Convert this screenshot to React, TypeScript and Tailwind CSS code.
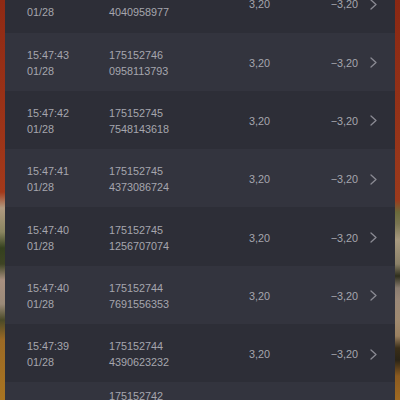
import React from 'react'

interface Trade {
    time: string;
    date: string;
    order: string[];
    price: string;
    profit: string;
}

const trades: Trade[] = [
    { time: '15:47:44', date: '01/28', order: ['175152746', '4040958977'], price: '3,20', profit: '−3,20' },
    { time: '15:47:43', date: '01/28', order: ['175152746', '0958113793'], price: '3,20', profit: '−3,20' },
    { time: '15:47:42', date: '01/28', order: ['175152745', '7548143618'], price: '3,20', profit: '−3,20' },
    { time: '15:47:41', date: '01/28', order: ['175152745', '4373086724'], price: '3,20', profit: '−3,20' },
    { time: '15:47:40', date: '01/28', order: ['175152745', '1256707074'], price: '3,20', profit: '−3,20' },
    { time: '15:47:40', date: '01/28', order: ['175152744', '7691556353'], price: '3,20', profit: '−3,20' },
    { time: '15:47:39', date: '01/28', order: ['175152744', '4390623232'], price: '3,20', profit: '−3,20' },
    { time: '15:47:38', date: '01/28', order: ['175152742', '8815630917', '2'], price: '3,20', profit: '−3,20' },
]

function Chevron() {
    return (
        <svg width="7" height="11" viewBox="0 0 7 11" fill="none">
            <polyline points="1,1 6,5.5 1,10" stroke="#8a8a93" strokeWidth="1.3" strokeLinecap="round" strokeLinejoin="round" />
        </svg>
    )
}

function TradeRow({ trade, index }: { trade: Trade; index: number }) {
    return (
        <div className={`h-[58.3px] shrink-0 flex items-center pl-[22px] pt-[2px] ${index % 2 === 0 ? 'bg-[#2d2e37]' : 'bg-[#33343e]'}`}>
            <div className="w-[82px] flex flex-col">
                <span>{trade.time}</span>
                <span>{trade.date}</span>
            </div>
            <div className="w-[117px] flex flex-col">
                {trade.order.map((line, i) => (
                    <span key={i}>{line}</span>
                ))}
            </div>
            <div className="w-[44px] text-right">{trade.price}</div>
            <div className="w-[88px] text-right">{trade.profit}</div>
            <div className="ml-[12px] flex items-center">
                <Chevron />
            </div>
        </div>
    )
}

export default function App() {
    return (
        <div
            className="h-[400px] w-full overflow-hidden flex text-[10.8px] leading-[16px] text-[#a6a6ae]"
            style={{ fontFamily: '"Liberation Sans", Arial, sans-serif' }}
        >
            {/* blurred photo showing at the edges */}
            <div className="w-[5px] shrink-0 bg-[linear-gradient(180deg,#8f2a14_0%,#a3391a_48%,#b09a80_52%,#8a8560_58%,#34401e_62%,#3e4424_66%,#a99080_70%,#9b8a78_76%,#4a4a28_80%,#9c6a25_85%,#a87421_100%)]" />

            <div className="flex-1 flex flex-col -mt-[25.8px]">
                {trades.map((trade, i) => (
                    <TradeRow key={i} trade={trade} index={i} />
                ))}
            </div>

            <div className="w-[5px] shrink-0 bg-[linear-gradient(180deg,#8a2813_0%,#9c3a1c_50%,#6a6a3a_53%,#7a7552_56%,#a89a80_60%,#8a8068_66%,#2e2e1c_69%,#8a7c70_72%,#9a8878_75%,#a08a70_80%,#9a8060_84%,#3a2e18_87%,#2a2416_90%,#8a5a20_94%,#a06a22_100%)]" />
        </div>
    )
}
